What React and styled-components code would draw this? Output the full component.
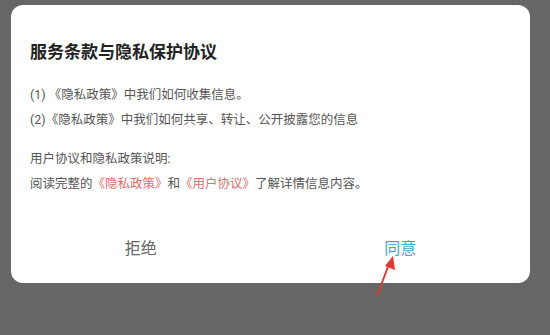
import React from 'react'
import styled, { createGlobalStyle } from 'styled-components'

const GlobalStyle = createGlobalStyle`
 html, body {
  margin: 0;
  padding: 0;
  background: #666666;
  font-family: Roboto, "Noto Sans CJK SC", "Noto Sans", sans-serif;
 }
`

const Page = styled.div`
 position: relative;
 width: 550px;
 height: 335px;
 padding: 5px 0 0 11px;
 box-sizing: border-box;
`

const Card = styled.div`
 width: 519px;
 height: 278px;
 background: #ffffff;
 border-radius: 12px;
 display: flex;
 flex-direction: column;
`

const Content = styled.div`
 padding: 35px 19px 0;
`

const Title = styled.h2`
 margin: 0 0 18px;
 font-size: 17px;
 line-height: 24px;
 font-weight: bold;
 color: #222222;
`

const Line = styled.p`
 margin: 0;
 margin-top: ${(p) => (p.$gap ? '14px' : '0')};
 font-size: 12.5px;
 line-height: 25px;
 color: #555555;
`

const Link = styled.span`
 color: #e36d6d;
`

const Footer = styled.div`
 margin-top: auto;
 height: 72px;
 display: flex;
`

const Button = styled.button`
 flex: 1;
 border: none;
 background: transparent;
 font-family: inherit;
 font-size: 16px;
 color: ${(p) => (p.$primary ? '#33a9e0' : '#666666')};
 cursor: pointer;
`

const Arrow = styled.svg`
 position: absolute;
 left: 370px;
 top: 250px;
`

export default function App() {
 return (
  <>
   <GlobalStyle />
   <Page>
    <Card>
     <Content>
      <Title>服务条款与隐私保护协议</Title>
      <Line>(1) 《隐私政策》中我们如何收集信息。</Line>
      <Line>(2)《隐私政策》中我们如何共享、转让、公开披露您的信息</Line>
      <Line $gap>用户协议和隐私政策说明:</Line>
      <Line>
       阅读完整的<Link>《隐私政策》</Link>和<Link>《用户协议》</Link>了解详情信息内容。
      </Line>
     </Content>
     <Footer>
      <Button>拒绝</Button>
      <Button $primary>同意</Button>
     </Footer>
    </Card>
    <Arrow width="30" height="50" viewBox="0 0 30 50">
     <line x1="7" y1="46" x2="19" y2="14" stroke="#e8352e" strokeWidth="2" />
     <polygon points="23,6 25,20 15,16" fill="#e8352e" />
    </Arrow>
   </Page>
  </>
 )
}
